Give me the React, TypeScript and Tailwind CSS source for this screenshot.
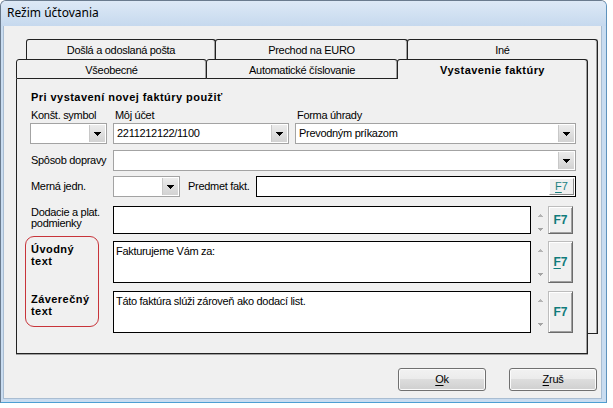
import React from "react";

const base =
  "font-['Liberation_Sans',Arial,sans-serif] text-[11px] leading-[13px] tracking-[-0.3px] text-black";

function DownArrow() {
  return (
    <svg width="7" height="4" viewBox="0 0 7 4" className="block" shapeRendering="crispEdges">
      <path d="M0 0h7v1H0zM1 1h5v1H1zM2 2h3v1H2zM3 3h1v1H3z" fill="#000" />
    </svg>
  );
}

function SpinUp() {
  return (
    <svg width="5" height="3" viewBox="0 0 5 3" className="block" shapeRendering="crispEdges">
      <path d="M2 0h1v1H2zM1 1h3v1H1zM0 2h5v1H0z" fill="#b4b4b4" />
    </svg>
  );
}

function SpinDown() {
  return (
    <svg width="5" height="3" viewBox="0 0 5 3" className="block" shapeRendering="crispEdges">
      <path d="M0 0h5v1H0zM1 1h3v1H1zM2 2h1v1H2z" fill="#a4a4a4" />
    </svg>
  );
}

function Combo({ className = "", value }: { className?: string; value?: string }) {
  return (
    <div className={`flex h-[21px] border border-[#a3a3a3] bg-white ${className}`}>
      <div className="flex min-w-0 flex-1 items-center overflow-hidden whitespace-nowrap pl-[3px]">
        {value}
      </div>
      <div className="my-px mr-px flex w-[16px] items-center justify-center border-l border-[#c8c8c8] bg-linear-to-b from-[#ececec] to-[#d2d2d2]">
        <DownArrow />
      </div>
    </div>
  );
}

function Tab({ className = "", children }: { className?: string; children: React.ReactNode }) {
  return (
    <div
      className={`flex justify-center whitespace-nowrap rounded-t-[3px] border-l border-r border-t border-[#222] bg-[#f0f0f0] pt-[4px] shadow-[inset_-1px_0_0_#a0a0a0] ${className}`}
    >
      {children}
    </div>
  );
}

function F7Big({ underline = false }: { underline?: boolean }) {
  return (
    <div className="flex h-full w-[25px] items-center justify-center border border-b-[#6b6b6b] border-l-[#bdbdbd] border-r-[#6b6b6b] border-t-[#bdbdbd] bg-[#f0f0f0] text-[12px] font-bold tracking-normal text-[#0f7b7b] shadow-[inset_1px_1px_0_#ffffff,inset_-1px_-1px_0_#a0a0a0]">
      <span>
        {underline ? <span className="underline underline-offset-[2px]">F</span> : "F"}7
      </span>
    </div>
  );
}

function Spinner({ tall = true }: { tall?: boolean }) {
  return (
    <div
      className={`flex w-[17px] flex-col items-center justify-between pl-px ${
        tall ? "pb-[7px] pt-[8px]" : "pb-[3px] pt-[8px]"
      }`}
    >
      <SpinUp />
      <SpinDown />
    </div>
  );
}

export default function App() {
  return (
    <div className={`h-[408px] w-[613px] bg-white ${base}`}>
      <div className="flex h-[403px] w-[607px] flex-col rounded-t-[6px] border border-[#6a7b8e] border-b-[#4d9fd3] border-r-[#5f93bd] bg-[#c9dcf0]">
        {/* title bar */}
        <div className="h-[25px] shrink-0 rounded-t-[5px] bg-linear-to-b from-[#dde9f6] to-[#c6d9ee] pl-[6px] pt-[4px] font-['Noto_Sans',sans-serif] text-[12px] leading-[16px] tracking-normal">
          Režim účtovania
        </div>

        {/* client */}
        <div className="ml-[2px] h-[373px] w-[599px] border-b border-l border-r border-[#a9bdd2] bg-[#f0f0f0] pl-[12px] pt-[13px]">
          {/* tab control */}
          <div className="relative h-[315px] w-[582px]">
            {/* back row */}
            <div className="ml-[10px] w-[572px]">
              <div className="flex h-[21px]">
                <Tab className="w-[190px]">Došlá a odoslaná pošta</Tab>
                <Tab className="-ml-px w-[193px]">Prechod na EURO</Tab>
                <Tab className="-ml-px w-[191px]">Iné</Tab>
              </div>
              <div className="h-[274px] border-b border-r border-[#222] shadow-[inset_-1px_0_0_#a0a0a0]" />
            </div>

            {/* front row + page */}
            <div className="absolute left-0 top-[20px] w-[572px]">
              <div className="flex h-[20px]">
                <Tab className="w-[191px] border-b">Všeobecné</Tab>
                <Tab className="-ml-px w-[192px] border-b">Automatické číslovanie</Tab>
                <Tab className="-ml-px w-[191px] font-bold tracking-[0.45px]">Vystavenie faktúry</Tab>
              </div>

              <div className="h-[275px] border-b border-l border-r border-[#222] bg-[#f0f0f0] pl-[13px] pt-[12px] shadow-[0_1px_0_#a0a0a0,inset_-1px_0_0_#a0a0a0]">
                <div className="h-[13px] pl-px font-bold tracking-[0.45px]">
                  Pri vystavení novej faktúry použiť
                </div>

                <div className="mt-[5px] flex h-[13px]">
                  <div className="w-[77px] pl-px">Konšt. symbol</div>
                  <div className="ml-[6px] w-[176px] pl-[2px]">Môj účet</div>
                  <div className="ml-[6px] w-[281px] pl-[2px]">Forma úhrady</div>
                </div>

                <div className="mt-px flex">
                  <Combo className="w-[77px]" />
                  <Combo className="ml-[6px] w-[176px]" value="2211212122/1100" />
                  <Combo className="ml-[6px] w-[281px]" value="Prevodným príkazom" />
                </div>

                <div className="mt-[6px] flex items-center">
                  <div className="w-[83px] pl-px">Spôsob dopravy</div>
                  <Combo className="w-[463px]" />
                </div>

                <div className="mt-[5px] flex items-center">
                  <div className="w-[83px] pl-px">Merná jedn.</div>
                  <Combo className="w-[67px]" />
                  <div className="ml-[8px] w-[68px]">Predmet fakt.</div>
                  <div className="flex h-[21px] w-[320px] border border-black bg-white">
                    <div className="my-px ml-auto mr-px flex w-[25px] items-center justify-center border border-b-[#8a8a8a] border-l-[#ffffff] border-r-[#8a8a8a] border-t-[#ffffff] bg-[#f0f0f0] tracking-normal text-[#1a8080]">
                      <span>
                        <span className="underline underline-offset-[2px]">F</span>7
                      </span>
                    </div>
                  </div>
                </div>

                <div className="mt-[9px] flex h-[28px]">
                  <div className="w-[83px] pl-px pt-px leading-[11px]">
                    Dodacie a plat.
                    <br />
                    podmienky
                  </div>
                  <div className="w-[418px] border border-black bg-white" />
                  <Spinner tall={false} />
                  <F7Big />
                </div>

                <div className="relative mt-[7px]">
                  <div className="pointer-events-none absolute left-[-5px] top-[-5px] h-[91px] w-[74px] rounded-[9px] border border-[#c8343a]" />

                  <div className="flex h-[42px]">
                    <div className="w-[83px] pl-px pt-[2px] font-bold leading-[12px] tracking-[0.45px]">
                      Úvodný
                      <br />
                      text
                    </div>
                    <div className="w-[418px] border border-black bg-white pl-[2px] pt-[3px]">
                      Fakturujeme Vám za:
                    </div>
                    <Spinner />
                    <F7Big underline />
                  </div>

                  <div className="mt-[8px] flex h-[42px]">
                    <div className="w-[83px] pl-px pt-[2px] font-bold leading-[12px] tracking-[0.45px]">
                      Záverečný
                      <br />
                      text
                    </div>
                    <div className="w-[418px] border border-black bg-white pl-[2px] pt-[3px]">
                      Táto faktúra slúži zároveň ako dodací list.
                    </div>
                    <Spinner />
                    <F7Big />
                  </div>
                </div>
              </div>
            </div>
          </div>

          {/* buttons */}
          <div className="mt-[14px] flex justify-end gap-[23px] pr-[4px]">
            <button className="flex h-[23px] w-[88px] items-center justify-center rounded-[3px] border border-[#707070] bg-[linear-gradient(#f2f2f2_0%,#ebebeb_50%,#dddddd_50%,#cfcfcf_100%)] shadow-[inset_0_0_0_1px_#fbfbfb]">
              <span>
                <span className="underline underline-offset-[2px]">O</span>k
              </span>
            </button>
            <button className="flex h-[23px] w-[88px] items-center justify-center rounded-[3px] border border-[#707070] bg-[linear-gradient(#f2f2f2_0%,#ebebeb_50%,#dddddd_50%,#cfcfcf_100%)] shadow-[inset_0_0_0_1px_#fbfbfb]">
              <span>
                <span className="underline underline-offset-[2px]">Z</span>ruš
              </span>
            </button>
          </div>
        </div>
      </div>
    </div>
  );
}
